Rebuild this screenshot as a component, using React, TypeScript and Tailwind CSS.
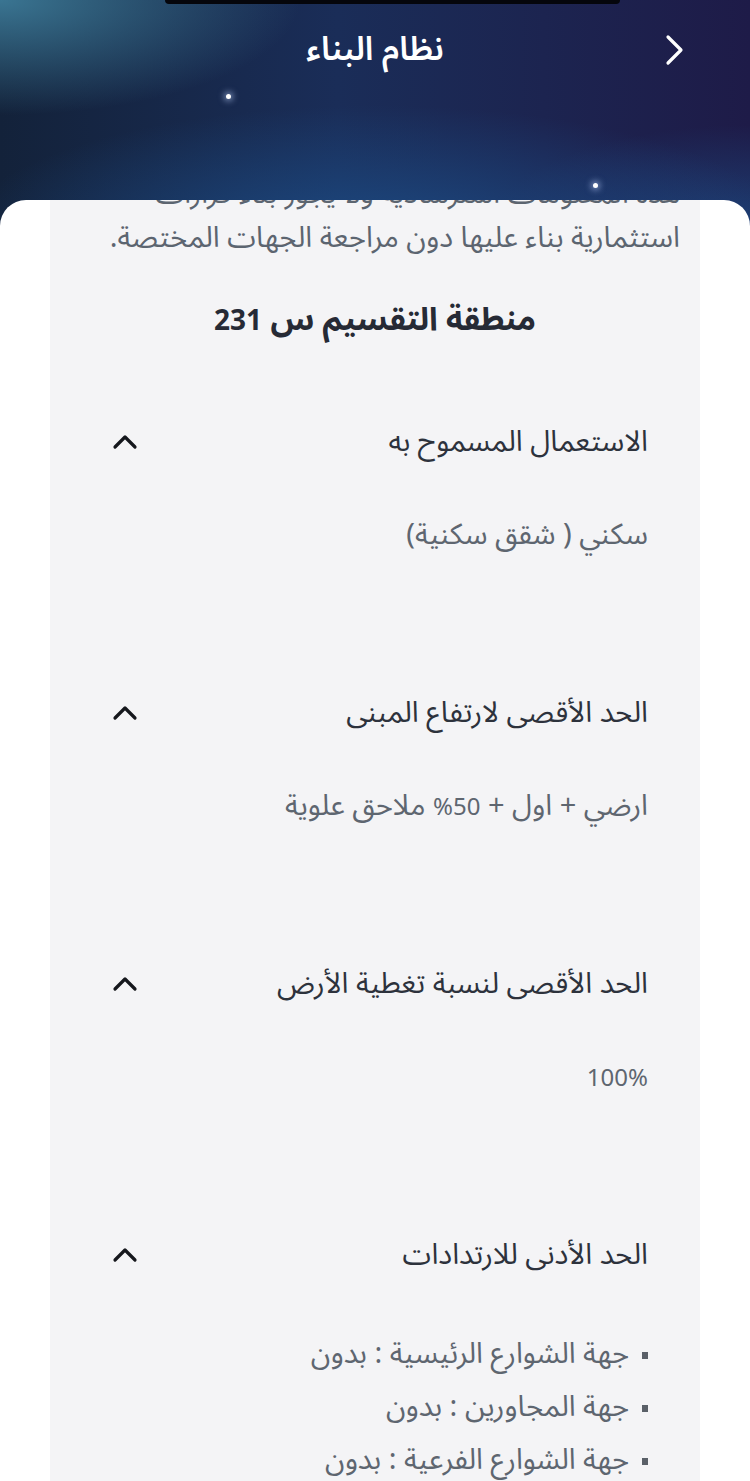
import React from 'react';

interface Section {
  title: string;
  value?: React.ReactNode;
  items?: string[];
}

// Latin digits sit a little smaller than the Arabic run around them
const Num = ({ children }: { children: React.ReactNode }) => <span className="text-[24px]">{children}</span>;

const sections: Section[] = [
  { title: 'الاستعمال المسموح به', value: 'سكني ( شقق سكنية)' },
  {
    title: 'الحد الأقصى لارتفاع المبنى',
    value: (
      <>
        ارضي + اول + <Num>50%</Num> ملاحق علوية
      </>
    ),
  },
  { title: 'الحد الأقصى لنسبة تغطية الأرض', value: <Num>100%</Num> },
  {
    title: 'الحد الأدنى للارتدادات',
    items: ['جهة الشوارع الرئيسية : بدون', 'جهة المجاورين : بدون', 'جهة الشوارع الفرعية : بدون'],
  },
];

function ChevronUpIcon() {
  return (
    <svg width="26" height="16" viewBox="0 0 26 16" fill="none" className="shrink-0">
      <polyline points="3,13 13,3 23,13" stroke="#15171c" strokeWidth="3.2" strokeLinecap="round" strokeLinejoin="round" />
    </svg>
  );
}

function ChevronRightIcon() {
  return (
    <svg width="24" height="32" viewBox="0 0 24 32" fill="none">
      <polyline points="6,3 19,16 6,29" stroke="#ffffff" strokeWidth="3.2" strokeLinecap="round" strokeLinejoin="round" />
    </svg>
  );
}

function RuleSection({ section }: { section: Section }) {
  return (
    <div className="h-[271px] flex flex-col">
      <div className="flex items-center justify-between h-10">
        <h3 className="text-[29px] leading-10 text-[#2d323c]">{section.title}</h3>
        <ChevronUpIcon />
      </div>
      {section.value && (
        <p className="mt-[53px] text-[29px] leading-10 text-[#5e6670]">{section.value}</p>
      )}
      {section.items && (
        <ul className="mt-[52px] flex flex-col">
          {section.items.map((item) => (
            <li key={item} className="flex items-center gap-[13px] h-[53px] text-[29px] leading-[53px] text-[#5e6670]">
              <span className="w-[6px] h-[7px] bg-[#5a6068] shrink-0 mt-[4px]" />
              <span>{item}</span>
            </li>
          ))}
        </ul>
      )}
    </div>
  );
}

export default function App() {
  return (
    <div
      dir="rtl"
      className="relative w-[750px] h-[1481px] overflow-hidden bg-white font-['Noto_Sans_Arabic','DejaVu_Sans',sans-serif]"
    >
      {/* night-sky header */}
      <header className="relative h-[240px] bg-[radial-gradient(ellipse_50%_60%_at_0%_0%,#3a7592_0%,transparent_80%),radial-gradient(ellipse_70%_70%_at_50%_100%,#1c4a82_0%,transparent_80%),radial-gradient(ellipse_45%_60%_at_100%_100%,#1d4278_0%,transparent_80%),linear-gradient(90deg,#13223a_0%,#1a2d58_45%,#1e1b48_100%)]">
        <div className="absolute top-0 left-[165px] w-[455px] h-[4px] rounded-b-full bg-[#05060c]" />
        <span className="absolute left-[226px] top-[94px] w-[5px] h-[5px] rounded-full bg-white shadow-[0_0_6px_2px_rgba(190,210,255,0.6)]" />
        <span className="absolute left-[593px] top-[183px] w-[5px] h-[5px] rounded-full bg-white shadow-[0_0_6px_2px_rgba(190,210,255,0.6)]" />
        <div className="flex items-center h-[100px] px-[64px]">
          <ChevronRightIcon />
          <h1 className="flex-1 text-center text-[33px] font-semibold text-white -mr-[24px]">نظام البناء</h1>
        </div>
      </header>

      {/* content sheet */}
      <main className="relative -mt-[40px] h-[1281px] rounded-t-[26px] bg-white overflow-hidden">
        <div className="flow-root mx-[50px] h-full bg-[#f4f4f6]">
          <div className="-mt-[28px] pr-[20px] text-[29px] leading-[44px] text-[#5c6570] whitespace-nowrap">
            <p>هذه المعلومات استرشادية ولا يجوز بناء قرارات</p>
            <p>استثمارية بناء عليها دون مراجعة الجهات المختصة.</p>
          </div>
          <h2 className="mt-[40px] text-center text-[32px] leading-10 font-bold text-[#262a35]">
            منطقة التقسيم س <span className="text-[28px]">231</span>
          </h2>
          <div className="mt-[80px] pr-[52px] pl-[62px]">
            {sections.map((s) => (
              <RuleSection key={s.title} section={s} />
            ))}
          </div>
        </div>
      </main>
    </div>
  );
}
